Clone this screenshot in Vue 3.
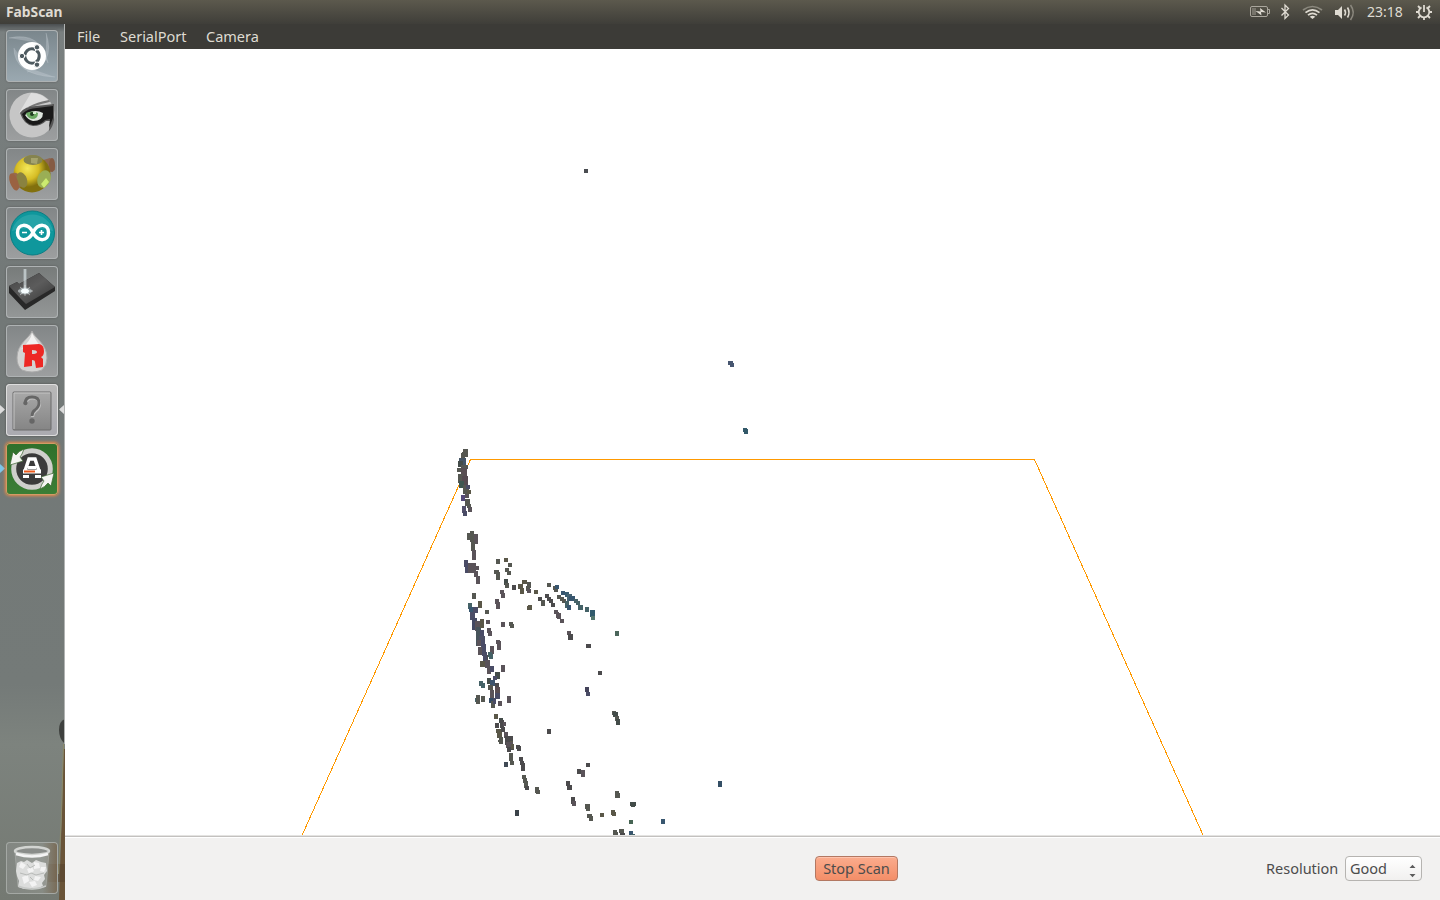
<script setup>
const menus = ['File', 'SerialPort', 'Camera']
const launcher = ['dash', 'eye', 'scad', 'arduino', 'drive', 'replicator', 'unknown', 'updater']

// Point cloud clusters: origin in canvas pixels, cells as [x, y, w, h, colour] in thirds of a pixel.
const g = '#555751', p = '#5a5359', k = '#4b4a4c', b = '#4a4c66', t = '#456267', o = '#5a5748', n = '#38566f', d = '#434c49'
const clusters = [
  { x: 375, y: 391, cells: [
    [69,27,15,12,g],[66,36,18,15,g],[63,39,12,15,g],[57,54,21,21,'#455565'],[54,63,15,18,d],[51,84,12,12,g],[63,75,21,12,g],
    [63,84,18,30,'#584e52'],[54,102,15,27,g],[66,108,18,27,'#554a50'],[57,123,15,21,'#3e5650'],[69,135,18,15,g],[78,135,12,12,b],
    [69,147,12,15,g],[81,150,12,12,o],[75,162,12,12,p],[63,165,12,18,'#55497a'],[75,177,15,21,g],[81,192,12,12,g],[83,201,12,15,p],
    [66,198,12,21,'#53506b'],[69,213,12,15,b],[81,279,12,21,g],[90,273,12,33,g],[102,282,12,30,p],[93,306,12,27,g],[96,333,12,27,g],
    [168,357,12,15,o],[192,354,12,12,g],[204,369,12,12,g] ] },
  { x: 385, y: 501, cells: [
    [66,0,12,30,p],[42,30,12,21,b],[45,42,15,27,b],[54,39,24,30,p],[72,48,15,12,p],[72,63,12,18,p],[78,78,12,24,p],
    [138,27,12,15,g],[162,24,12,12,o],[174,39,12,12,g],[132,60,15,12,g],[138,66,12,24,g],[165,54,12,12,g],[171,63,12,12,g],
    [162,87,12,18,d],[165,99,12,15,g],[186,105,12,15,k],[204,102,15,15,o],[210,114,12,18,o],[216,90,16,12,o],[231,96,12,18,g],[228,108,12,15,g],[231,117,12,12,p],
    [252,120,12,12,o],[291,99,12,12,g],[309,108,16,12,g],[312,114,12,12,g],[315,105,12,12,n],[333,123,12,12,n],[345,126,12,15,'#395d71'],[351,132,16,21,'#456271'],[357,138,18,16,n],
    [372,147,12,12,t],[378,153,12,12,t],[384,165,14,15,t],[404,171,13,15,t],[420,180,15,21,'#315a6c'],[423,198,12,12,'#54776d'],
    [264,141,12,12,k],[273,150,12,18,g],[285,132,12,12,k],[291,141,12,12,k],[297,147,12,12,k],[303,159,12,12,k],[321,135,12,12,g],[330,141,12,12,g],[336,147,12,12,g],[345,153,12,21,t],[351,165,12,15,n],
    [231,167,15,12,o],[234,165,12,12,o],[312,180,12,12,p],[318,186,10,18,p],[322,189,10,18,p],[330,207,12,12,p],
    [351,243,12,12,p],[354,252,14,18,k],[408,282,15,12,k],[495,243,12,15,'#4b665b'],
    [66,129,12,18,g],[54,159,12,18,t],[57,171,12,15,n],[69,171,15,18,b],[60,186,16,24,b],[66,204,15,36,'#444963'],[75,213,15,30,p],[78,231,15,57,'#47545b'],[90,240,12,36,b],[87,258,18,27,'#4e5065'],[84,291,12,24,p],[96,282,12,36,b],[102,315,12,15,k],[114,306,12,15,t],[120,288,12,24,g],[117,315,13,12,t],
    [84,153,12,20,o],[105,180,12,12,g],[90,207,12,27,o],[108,210,12,12,p],[111,234,12,15,p],[114,243,12,15,p],
    [135,147,12,15,p],[138,156,12,21,p],[150,120,12,12,p],[153,129,12,15,p],[153,216,12,15,p],[177,216,12,12,g],[180,222,12,12,g],[138,270,12,12,p],[141,276,12,24,p] ] },
  { x: 385, y: 591, cells: [
    [81,0,12,18,p],[93,0,12,36,b],[84,21,12,24,p],[99,36,12,30,b],[105,60,15,24,p],[111,84,12,18,p],[120,18,12,24,p],
    [114,36,12,12,t],[117,42,12,14,t],[90,63,15,17,o],[120,78,12,18,b],[153,75,12,21,p],[141,3,12,27,p],
    [135,96,15,20,d],[129,108,12,12,b],[111,114,12,18,d],[120,120,15,18,'#3d546d'],[135,129,12,15,k],[114,135,15,15,g],[120,150,12,24,p],[135,141,15,21,'#594d52'],[135,159,15,18,b],
    [117,174,21,15,'#344b65'],[123,183,12,21,g],[129,174,9,18,b],[144,183,12,14,p],[171,168,12,21,p],[75,174,9,12,t],[78,165,12,27,g],[93,168,12,18,g],[87,123,12,15,t],[93,129,12,15,t],
    [132,222,12,15,o],[147,234,12,15,d],[150,240,12,24,k],[159,246,9,12,p],[135,249,12,14,k],[138,267,15,12,o],[141,276,15,18,o],[147,291,12,21,g],[153,261,11,15,k],[162,276,12,18,p],[165,288,24,27,k],[171,312,21,18,k],[180,303,9,24,o],[198,315,12,12,k],[204,318,9,12,k],
    [291,267,12,15,k],[444,93,12,12,k],[405,141,12,15,'#44435a'],[408,156,12,12,b],[486,213,12,12,g],[489,216,15,15,d],[495,228,12,15,g],[498,237,12,18,d] ] },
  { x: 415, y: 691, cells: [
    [54,0,12,6,g],[57,3,12,9,g],[75,0,12,9,k],[78,6,20,18,p],[81,21,12,15,k],[93,12,9,15,o],[108,15,12,12,k],[111,21,12,12,k],
    [87,39,12,24,g],[90,63,12,12,g],[72,66,12,15,'#414a55'],[117,51,12,12,k],[120,63,12,12,k],[123,69,12,24,k],[126,105,12,12,g],[129,114,12,15,g],[132,123,12,21,g],[135,138,12,12,k],[165,141,12,18,g],[168,150,12,12,g],
    [105,210,12,18,'#3b4349'],[258,123,12,15,k],[261,135,15,15,k],[291,87,12,15,k],[303,90,12,21,p],[318,69,12,12,k],
    [273,171,12,21,k],[276,183,12,15,p],[315,192,15,15,g],[318,198,12,15,g],[321,222,15,12,g],[327,228,12,15,g],[360,219,12,12,o],[393,210,12,15,o],[396,216,12,12,o],[405,153,12,12,g],[405,159,15,15,g],
    [450,186,18,12,d],[453,189,12,12,d],[447,240,12,12,'#466453'],[543,237,12,15,n],[714,123,12,18,'#344f65'],[399,270,12,15,g],[405,276,9,9,g],[417,267,15,12,g],[420,279,15,6,k],[447,273,12,12,n],[453,282,12,3,t] ] },
  { x: 519, y: 120, cells: [[0,0,12,12,'#4a4d51']] },
  { x: 663, y: 312, cells: [[0,0,15,12,'#475670'],[6,6,12,12,'#475670']] },
  { x: 678, y: 379, cells: [[0,0,12,12,'#325969'],[3,3,12,15,'#325969']] },
]
const points = clusters.flatMap(c => c.cells.map(([x, y, w, h, f]) => {
  const l = Math.round(x / 3), u = Math.round(y / 3)
  return { x: c.x + l, y: c.y + u, w: Math.round((x + w) / 3) - l, h: Math.round((y + h) / 3) - u, f }
}))
</script>

<template>
  <div class="desktop">
    <header class="panel">
      <span class="title">FabScan</span>
      <div class="tray">
        <svg class="indicators" width="110" height="24" viewBox="0 0 110 24" fill="none" stroke="#dfdbd2">
          <rect x="3.500" y="6.500" width="17" height="10" rx="1.500" stroke="#aaa69d" />
          <path d="M21 9.500h1.500v4H21" stroke="#aaa69d" />
          <path d="M5 8h4v7H5z" fill="#77746b" stroke="none" />
          <path d="M8.500 11l5 .500-.500-3.500 6 4.500-5-.500.500 3.500z" fill="#dfdbd2" stroke="none" />
          <path d="M34.500 8l7 7-3.500 3.500V5l3.500 3.500-7 7" stroke-width="1.300" />
          <path d="M56 10q9.500-7 19 0" stroke="#8b887e" stroke-width="1.700" />
          <path d="M58.500 12.600q7-5.500 14 0M61 15.200q4.500-3.800 9 0" stroke-width="1.700" />
          <path d="M62.700 16.700q2.800-2 5.600 0L65.500 19z" fill="#dfdbd2" stroke="none" />
          <path d="M88 10h3l4-4v13l-4-4h-3z" fill="#dfdbd2" stroke="none" />
          <path d="M97.500 9.500q2 3 0 6M100.500 7.500q3 5 0 10" stroke-width="1.600" />
          <path d="M103.500 5q5.500 7.500 0 15" stroke="#8b887e" stroke-width="1.600" />
        </svg>
        <span class="clock">23:18</span>
        <svg class="gear" width="18" height="18" viewBox="-9 -9 18 18" stroke="#dfdbd2" fill="none" stroke-width="1.800">
          <path d="M-2.500-4.600a5.300 5.300 0 1 0 5 0" />
          <path d="M0-7V0M5.500 0H8M-5.500 0H-8M0 5.500V8M4 4l2 2M-4 4l-2 2M4-4l2-2M-4-4l-2-2" />
        </svg>
      </div>
    </header>

    <div class="workspace">
      <nav class="launcher">
        <div v-for="name in launcher" :key="name" class="tile" :class="name">
          <svg width="52" height="52" viewBox="0 0 52 52">
            <g v-if="name === 'dash'">
              <path d="M3 8q32-7 39 25L28 12zM40 3q10 32-19 39l19-14zM49 47Q8 45 8 18l15 20z" fill="#d4dce0" opacity=".3" />
              <path d="M3 8q32-7 39 25M40 3q10 32-19 39M49 47Q8 45 8 18" fill="none" stroke="#c5cfd4" opacity=".35" />
              <circle cx="26" cy="26" r="14" fill="#fff" />
              <circle cx="26" cy="26" r="7.200" fill="none" stroke="#4e5a60" stroke-width="3" stroke-dasharray="14 1.080" stroke-dashoffset="7" />
              <g fill="#4e5a60" stroke="#fff"><circle cx="16" cy="26" r="2.700" /><circle cx="31" cy="17.300" r="2.700" /><circle cx="31" cy="34.700" r="2.700" /></g>
            </g>
            <g v-else-if="name === 'eye'">
              <circle cx="26" cy="26" r="22.500" fill="#c6c6c6" />
              <path d="M25 4a22 22 0 0 1 19 10L31 15 13 24z" fill="#dedede" />
              <path d="M22 18q9-5 21-7l1 2q-10 2-19 5z" fill="#777" />
              <path d="M14 24q5-7 16-7l18-2v16q-1 7-5 11l1-10h-4q-5 5-13 5-9-1-13-13z" fill="#555" />
              <path d="M16 25q6-6 15-6l16-2v12l-4 10 1-9-5 1q-4 5-12 5-8-1-11-11z" fill="#191919" />
              <path d="M19 26q9-7 18-2 0 8-10 8-5-1-8-6z" fill="#dfe6df" />
              <path d="M20 24q6-3 12 0 0 6-6 6-5-1-6-6z" fill="#6aa862" />
              <circle cx="26" cy="25" r="2" fill="#203c21" /><path d="M27 23h3v2h-3z" fill="#d6edcf" />
            </g>
            <g v-else-if="name === 'scad'">
              <path d="M34 13l10-3q6 2 5 12l-12 5z" fill="#8f6751" /><ellipse cx="46" cy="17" rx="3" ry="7" fill="#855b44" />
              <circle cx="26" cy="26" r="18.500" fill="url(#ball)" />
              <ellipse cx="27" cy="12" rx="9.500" ry="5" fill="#85834f" /><path d="M25 10l7 0-1 6-6-1z" fill="#a5a36e" />
              <ellipse cx="38" cy="31" rx="6.500" ry="9" transform="rotate(20 38 31)" fill="#9aae55" /><path d="M35 36l5-6 3 4-5 6z" fill="#cceb70" />
              <path d="M4 27q4-4 8-1l8 8-8 7q-8-3-8-14z" fill="#97694d" /><ellipse cx="16" cy="32" rx="5" ry="8" transform="rotate(-20 16 32)" fill="#8a8240" />
              <ellipse cx="8" cy="34" rx="4" ry="9" transform="rotate(-20 8 34)" fill="#9a6242" />
              <defs><radialGradient id="ball" cx=".38" cy=".35"><stop stop-color="#f4e85a" /><stop offset=".6" stop-color="#d6bd25" /><stop offset="1" stop-color="#82700e" /></radialGradient></defs>
            </g>
            <g v-else-if="name === 'arduino'">
              <circle cx="26.500" cy="26" r="22" fill="#0f979c" stroke="#087e84" />
              <path d="M6 24a21 21 0 0 1 41 0Q27 18 6 24z" fill="#43b1b5" opacity=".45" />
              <path d="M27 25.500c-5-10-15.500-9-15.500 0s10.500 10 15.500 0 15.500-9 15.500 0-10.500 10-15.500 0z" fill="none" stroke="#fff" stroke-width="3.500" />
              <path d="M16 25.500h5M33 25.500h5M35.500 23v5" stroke="#fff" stroke-width="1.600" />
            </g>
            <g v-else-if="name === 'drive'">
              <path d="M3 20l8-4 2 2 20-11 16 14v4L19 44 3 27z" fill="#282828" />
              <path d="M3 20l8-4 2 2 20-11 16 14-29 17-5-5z" fill="url(#metal)" />
              <path d="M19 3v21" stroke="#cfdbdf" stroke-width="3.500" opacity=".4" /><path d="M19 3v21" stroke="#e9f3f5" opacity=".8" />
              <ellipse cx="19" cy="25" rx="7" ry="3.500" fill="#c9dadd" opacity=".5" /><ellipse cx="19" cy="25" rx="4" ry="2.500" fill="#f3fdff" />
              <path d="M12 25h15M14 21l10 8M24 21l-10 8M19 19v11" stroke="#fff" stroke-width=".7" opacity=".7" />
              <defs><linearGradient id="metal" x2="1" y2="1"><stop stop-color="#444" /><stop offset=".5" stop-color="#5c5c5c" /><stop offset="1" stop-color="#333" /></linearGradient></defs>
            </g>
            <g v-else-if="name === 'replicator'">
              <path d="M26 6C24 13 11 18 11 33q0 8 5 12 10 4 20 0 5-5 5-12C41 18 28 13 26 6z" fill="#d3d3d2" stroke="#aaa" />
              <path d="M26 8q-1 8-12 17 12-8 24 0Q30 17 26 8z" fill="#f2f2f1" />
              <path fill-rule="evenodd" d="M17 20l16-1q5 1 5 7 0 5-3 6l2 2v8l-7 1-1-6q0-2-3-2v6l-8 1 1-14-2-1zm9 5v4q5 0 5-2t-5-2z" fill="#ed2824" />
            </g>
            <g v-else-if="name === 'unknown'">
              <rect x="7" y="8" width="38" height="38" rx="1" fill="url(#slate)" stroke="#6a6a6a" /><path d="M8 9h36M8 9v36" stroke="#c4c4c4" />
              <path d="M19 20q0-7 7-7t7 6q0 4-4 7-3 2-3 6" fill="none" stroke="#c0c0c0" stroke-width="3" transform="translate(.6 1)" />
              <path d="M19 20q0-7 7-7t7 6q0 4-4 7-3 2-3 6" fill="none" stroke="#666" stroke-width="2.800" />
              <circle cx="19.500" cy="19" r="2.200" fill="#666" /><circle cx="26" cy="37" r="2.700" fill="#666" />
              <defs><linearGradient id="slate" x2="0" y2="1"><stop stop-color="#a8a8a8" /><stop offset="1" stop-color="#858585" /></linearGradient></defs>
            </g>
            <g v-else>
              <circle cx="26" cy="26" r="18.300" fill="#3b3b3b" stroke="#cfcfcc" stroke-width="5" />
              <path d="M7 9l3 3q3-4 8-6-2 6-4 8l3 4-13 4z" fill="#f5f5f2" stroke="#39642f" stroke-width=".7" />
              <path d="M45 43l-3-3q-3 4-8 6 2-6 4-8l-3-4 13-4z" fill="#f5f5f2" stroke="#39642f" stroke-width=".7" />
              <path d="M19 28l4-12h6l4 12" fill="none" stroke="#fff" stroke-width="3.500" />
              <path d="M22 23h8v3h-8z" fill="#fff" />
              <path d="M17 32h6v3h-6zM29 32h6v3h-6zM17 26.500h18v4H17z" fill="#fff" /><path d="M18 27.500h11v2H18z" fill="#ed5a1c" />
            </g>
          </svg>
        </div>
        <div class="tile trash">
          <svg width="52" height="52" viewBox="0 0 52 52">
            <path d="M9 10l3 34q14 7 28 0l3-34z" fill="#a3a7a4" opacity=".5" stroke="#bcbfbc" />
            <g fill="#dcdddc">
              <path d="M11 21l4-2 3 1 3-2 5 3 4-3 5 2 5 1 1 8-3 4 1 4-3 4 1 3-7 3-6-1-6 1-6-2 1-6-2-5-1-5z" />
            </g>
            <g fill="#f3f3f3">
              <path d="M15 20l5 3-3 4-4-2zM28 20l5 1 1 5-6 1zM21 27l5-2 2 4-5 3zM16 35l6-2 1 6-5 3zM29 34l6 1-3 4-4-1zM23 40l6-1 2 4-5 2zM35 25l5 0-2 5-4-1z" />
            </g>
            <path d="M14 31l7 2 4-2 5 2 8-2M21 22l3 4 5-3M24 35l3 3" fill="none" stroke="#b8bab8" />
            <path d="M12 44q14 6 28 0" fill="none" stroke="#c7c9c7" stroke-width="1.500" />
            <ellipse cx="26" cy="9" rx="17" ry="4" fill="#8a8d8a" stroke="#d2d4d1" stroke-width="2.500" />
            <path d="M10 12q16 5 32 0" stroke="#f4f4f4" stroke-width="2.500" fill="none" />
          </svg>
        </div>
        <svg class="backdrop" width="65" height="876" viewBox="0 0 65 876">
          <path d="M65 695q-6 2-6 11t6 14z" fill="#3e403e" />
          <path d="M63.500 725h1.500v151H59l3-90z" fill="#6a5438" /><path d="M48 840h17v18H48z" fill="#59452f" opacity=".6" />
          <path d="M63.500 720l-2 70-3 60" fill="none" stroke="#8c8a68" />
          <path d="M0 381l5 4.500L0 390zM64 381l-5 4.500 5 4.500z" fill="#dcdcdc" />
          <path d="M0 440l5 4.500-5 4.500z" fill="#7cc5ea" />
          <path d="M64.500 0v720" stroke="#b1b3b2" />
        </svg>
      </nav>

      <main class="window">
        <nav class="menubar"><span v-for="m in menus" :key="m" :class="m.toLowerCase()">{{ m }}</span></nav>
        <svg class="scene" width="1375" height="786" viewBox="0 0 1375 786" shape-rendering="crispEdges">
          <path d="M237.200 786L405.500 410.500H969.500L1138 786" fill="none" stroke="#ff9900" />
          <rect v-for="(q, i) in points" :key="i" :x="q.x" :y="q.y" :width="q.w" :height="q.h" :fill="q.f" />
        </svg>
        <footer class="controls">
          <button class="stop"><span>Stop Scan</span></button>
          <div class="resolution">
            <span class="label">Resolution</span>
            <div class="select"><span>Good</span>
              <svg width="9" height="14" viewBox="0 0 9 14" fill="#5c5c5c"><path d="M1.500 4l3-3.300L7.500 4zM1.500 10h6l-3 3.300z" /></svg>
            </div>
          </div>
        </footer>
      </main>
    </div>
  </div>
</template>

<style>
body { margin: 0; overflow: hidden; }
</style>

<style scoped>
* { box-sizing: border-box; }
.desktop { width: 1440px; height: 900px; display: flex; flex-direction: column; overflow: hidden; font: 14.500px/20px "Noto Sans", "Open Sans", sans-serif; color: #4c4c4c; background: #fff; }
.panel { height: 24px; flex: none; display: flex; justify-content: space-between; background: linear-gradient(#5c594d, #3f3e39); color: #dfdbd2; }
.title { padding-left: 6px; font-weight: 700; font-size: 13.800px; line-height: 24px; }
.tray { display: flex; align-items: center; }
.indicators { margin-right: 10px; }
.clock { width: 36px; font-size: 14px; white-space: nowrap; }
.gear { margin: 0 7px 0 12px; }
.workspace { flex: 1; display: flex; min-height: 0; }
.launcher { position: relative; width: 65px; padding: 6px 0 6px 6px; display: flex; flex-direction: column; gap: 7px; background: linear-gradient(#4a4e50 0, #7a8080 8px, #727877 280px, #747a78 660px, #7d837e 720px, #747972 876px); }
.backdrop { position: absolute; left: 0; top: 0; }
.tile { position: relative; z-index: 1; width: 52px; height: 52px; flex: none; border-radius: 4px; background: linear-gradient(#828687, #9d9fa0); box-shadow: inset 0 0 0 1px #aeb2b3, 0 0 2px #555; }
.tile svg { display: block; }
.dash { background: linear-gradient(#7a868c, #9ba9b1); }
.drive { background: linear-gradient(#777b7a, #949797); }
.unknown { background: linear-gradient(#b8b8b8, #aaaab0); box-shadow: inset 0 0 0 1px #ddd, 0 0 2px #444; }
.updater { background: linear-gradient(#2f702b, #3b7e36); box-shadow: inset 0 0 0 1px #d39b66, 0 0 3px 1px #e88a49; }
.trash { margin-top: auto; background: linear-gradient(90deg, #858985cc, #8b8f88cc 70%, #79664ecc); box-shadow: inset 0 0 0 1px #a4a8a4; }
.window { width: 1375px; display: flex; flex-direction: column; }
.menubar { height: 25px; padding: 2px 0 0 12px; display: flex; background: #3c3b37; color: #dfdbd2; flex: none; }
.menubar span { white-space: nowrap; }
.file { width: 43px; }
.serialport { width: 86px; }
.scene { display: block; flex: none; }
.controls { flex: 1; border-top: 1px solid #e4e3e1; box-shadow: inset 0 1px #c3c1bf, inset 0 2px #fff; background: #f2f1f0; display: flex; justify-content: space-between; padding: 20px 18px 0 750px; }
.stop { width: 83px; height: 25px; padding: 0 0 2px; border: 1px solid #b37862; border-radius: 4px; background: linear-gradient(#fbac8d, #f38e68); box-shadow: inset 0 1px #ffc3ad; font: inherit; line-height: 20px; color: #4c4c4c; white-space: nowrap; }
.resolution { display: flex; gap: 7px; line-height: 25px; }
.label { width: 72px; white-space: nowrap; }
.select { width: 77px; height: 25px; padding: 0 4px; border: 1px solid #b6b4b1; border-radius: 4px; background: linear-gradient(#fff, #f1f0ef); line-height: 23px; display: flex; justify-content: space-between; }
.select svg { margin-top: 7px; }
</style>
